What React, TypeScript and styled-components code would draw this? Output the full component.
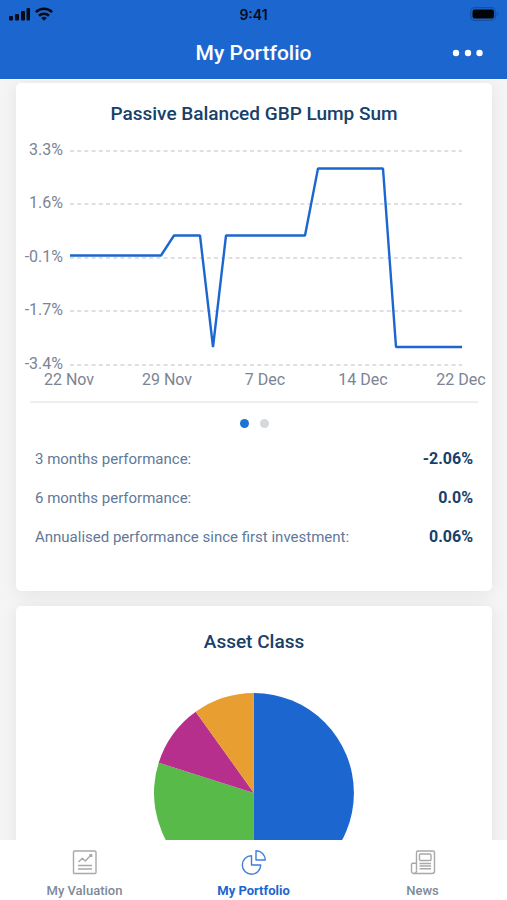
import React from "react";
import styled, { createGlobalStyle } from "styled-components";

const colors = {
  blue: "#1c66cf",
  navy: "#17406a",
  slate: "#5f7999",
  axis: "#7b8494",
};

const GlobalStyle = createGlobalStyle`
  *, *::before, *::after { box-sizing: border-box; }
  body {
    margin: 0;
    background: #f5f5f5;
    font-family: "Roboto", "Liberation Sans", sans-serif;
  }
  button { font: inherit; border: 0; padding: 0; background: none; cursor: pointer; }
`;

const Screen = styled.div`
  display: flex;
  flex-direction: column;
  height: 100vh;
  overflow: hidden;
`;

const Header = styled.header`
  flex: none;
  background: ${colors.blue};
  border-bottom: 1px solid #fff;
`;

const StatusBar = styled.div`
  display: grid;
  grid-template-columns: 1fr auto 1fr;
  align-items: center;
  height: 28px;
  padding: 0 8px;
  color: #060b18;
`;

const StatusIcons = styled.div<{ $end?: boolean }>`
  display: flex;
  gap: 4px;
  align-items: center;
  justify-content: ${(p) => (p.$end ? "flex-end" : "flex-start")};
`;

const Clock = styled.time`
  font-family: "Inter", sans-serif;
  font-size: 14px;
  font-weight: 600;
`;

const TitleBar = styled.div`
  display: grid;
  grid-template-columns: 1fr auto 1fr;
  align-items: center;
  height: 51px;
  padding: 0 23px 2px;
`;

const PageTitle = styled.h1`
  grid-column: 2;
  margin: 0;
  color: #fff;
  font-size: 21px;
  font-weight: 500;
  line-height: 28px;
`;

const MoreButton = styled.button`
  justify-self: end;
  display: flex;
  height: 28px;
  align-items: center;
  color: #fff;
`;

const Content = styled.main`
  flex: 1;
  min-height: 0;
  overflow: hidden;
  display: flex;
  flex-direction: column;
  gap: 15px;
  padding: 3px 15px 0 16px;
`;

const Card = styled.section`
  flex: none;
  background: #fff;
  border-radius: 5px;
  box-shadow: 0 2px 18px rgba(0, 0, 0, 0.08);
  padding-bottom: 35px;
`;

const CardTitle = styled.h2<{ $spaced?: boolean }>`
  margin: 0;
  padding-top: ${(p) => (p.$spaced ? 24 : 19)}px;
  text-align: center;
  color: ${colors.navy};
  font-size: 19px;
  font-weight: 500;
  line-height: 24px;
`;

const LineChart = styled.svg`
  display: block;
  width: 100%;
  margin-top: 10px;
  overflow: visible;
`;

const AxisLabel = styled.text`
  font-size: 16px;
  font-weight: 400;
  fill: ${colors.axis};
`;

const Divider = styled.hr`
  height: 2px;
  margin: 9px 14px 0;
  border: 0;
  background: #edeeef;
`;

const Pager = styled.div`
  display: flex;
  justify-content: center;
  gap: 11px;
  padding: 16px 0 11px;
`;

const PagerDot = styled.button<{ $active?: boolean }>`
  width: 9px;
  height: 9px;
  border-radius: 50%;
  background: ${(p) => (p.$active ? "#1b74d4" : "#d6d9dc")};
`;

const Figures = styled.dl`
  margin: 0;
  padding: 0 19px;
`;

const FigureRow = styled.div`
  display: flex;
  align-items: center;
  justify-content: space-between;
  height: 39px;
`;

const FigureLabel = styled.dt`
  color: ${colors.slate};
  font-size: 15px;
`;

const FigureValue = styled.dd`
  margin: 0;
  color: ${colors.navy};
  font-size: 16px;
  font-weight: 700;
`;

const Pie = styled.svg`
  display: block;
  width: 42%;
  margin: 39px auto 0;
`;

const TabBar = styled.nav`
  flex: none;
  display: grid;
  grid-template-columns: repeat(3, 1fr);
  height: 60px;
  background: #fff;
  position: relative;
`;

const Tab = styled.a<{ $active?: boolean }>`
  display: flex;
  flex-direction: column;
  align-items: center;
  gap: 7px;
  padding-top: 9px;
  color: ${(p) => (p.$active ? colors.blue : "#7e8a99")};
  font-size: 13px;
  font-weight: ${(p) => (p.$active ? 700 : 500)};
  line-height: 18px;
  text-decoration: none;
`;

const TabIcon = styled.svg<{ $active?: boolean }>`
  width: 26px;
  height: 26px;
  fill: none;
  stroke: ${(p) => (p.$active ? "#3f7fd8" : "#a9a9a9")};
  stroke-width: 1.4;
  stroke-linejoin: round;
`;

const yAxis = [
  { label: "3.3%", y: 15 },
  { label: "1.6%", y: 68 },
  { label: "-0.1%", y: 122 },
  { label: "-1.7%", y: 175 },
  { label: "-3.4%", y: 229 },
];

const xAxis = [
  { label: "22 Nov", x: 53 },
  { label: "29 Nov", x: 151 },
  { label: "7 Dec", x: 249 },
  { label: "14 Dec", x: 347 },
  { label: "22 Dec", x: 445 },
];

const figures = [
  { label: "3 months performance:", value: "-2.06%" },
  { label: "6 months performance:", value: "0.0%" },
  { label: "Annualised performance since first investment:", value: "0.06%" },
];

const slices = [
  { from: 0, to: 0.5, color: colors.blue },
  { from: 0.5, to: 0.799, color: "#58ba48" },
  { from: 0.799, to: 0.901, color: "#b72f8d" },
  { from: 0.901, to: 1, color: "#e89e30" },
];

const pointAt = (turn: number) => {
  const a = turn * Math.PI * 2;
  return `${100 + 100 * Math.sin(a)} ${100 - 100 * Math.cos(a)}`;
};

function Performance() {
  return (
    <Card>
      <CardTitle>Passive Balanced GBP Lump Sum</CardTitle>
      <LineChart viewBox="0 0 476 256" role="img" aria-label="Performance over time">
        {yAxis.map((t) => (
          <g key={t.label}>
            <line x1="54" x2="446" y1={t.y} y2={t.y} stroke="#d3d5d7" strokeWidth="1.6" strokeDasharray="4 3.2" />
            <AxisLabel x="47" y={t.y + 4} textAnchor="end">{t.label}</AxisLabel>
          </g>
        ))}
        {xAxis.map((t) => (
          <AxisLabel key={t.label} x={t.x} y="249" textAnchor="middle">{t.label}</AxisLabel>
        ))}
        <polyline
          points="54,119.5 145,119.5 158,99.5 184,99.5 197,211 210,99.5 289,99.5 302,32.5 367,32.5 380,211 446,211"
          fill="none"
          stroke={colors.blue}
          strokeWidth="2.4"
          strokeLinejoin="bevel"
        />
      </LineChart>
      <Divider />
      <Pager>
        <PagerDot $active aria-label="Chart 1" />
        <PagerDot aria-label="Chart 2" />
      </Pager>
      <Figures>
        {figures.map((f) => (
          <FigureRow key={f.label}>
            <FigureLabel>{f.label}</FigureLabel>
            <FigureValue>{f.value}</FigureValue>
          </FigureRow>
        ))}
      </Figures>
    </Card>
  );
}

function AssetClass() {
  return (
    <Card>
      <CardTitle $spaced>Asset Class</CardTitle>
      <Pie viewBox="0 0 200 200" role="img" aria-label="Asset class breakdown">
        {slices.map((s) => (
          <path key={s.color} fill={s.color} d={`M100 100 L${pointAt(s.from)} A100 100 0 0 1 ${pointAt(s.to)} Z`} />
        ))}
      </Pie>
    </Card>
  );
}

export default function App() {
  return (
    <>
      <GlobalStyle />
      <Screen>
        <Header>
          <StatusBar>
            <StatusIcons>
              <svg width="23" height="14" viewBox="0 0 23 14" fill="currentColor" aria-hidden="true">
                <rect x="1" y="9" width="4" height="4.5" rx="1" />
                <rect x="7" y="7" width="4" height="6.5" rx="1" />
                <rect x="13" y="4" width="4" height="9.5" rx="1" />
                <rect x="18.5" y="1" width="3.5" height="12.5" rx="1" />
              </svg>
              <svg width="18" height="14" viewBox="0 0 18 14" aria-hidden="true" fill="none" stroke="currentColor" strokeWidth="2.6">
                <path d="M0.9 5.1a11.6 11.6 0 0 1 16.2 0" />
                <path d="M4 8.7a7.2 7.2 0 0 1 10 0" />
                <path d="M9 13.8L6.2 11a4 4 0 0 1 5.6 0z" fill="currentColor" stroke="none" />
              </svg>
            </StatusIcons>
            <Clock>9:41</Clock>
            <StatusIcons $end>
              <svg width="29" height="14" viewBox="0 0 29 14" aria-hidden="true">
                <rect x="0.7" y="0.7" width="24.6" height="12.6" rx="4" fill="none" stroke="#194f9f" strokeWidth="1.2" />
                <rect x="2.5" y="2.5" width="21.5" height="9" rx="2.2" fill="#020408" />
                <path d="M26.8 5v4a2.2 2.2 0 0 0 0-4z" fill="#194f9f" />
              </svg>
            </StatusIcons>
          </StatusBar>
          <TitleBar>
            <PageTitle>My Portfolio</PageTitle>
            <MoreButton aria-label="More options">
              <svg width="32" height="8" viewBox="0 0 32 8" fill="currentColor" aria-hidden="true">
                <circle cx="4" cy="4" r="3.2" />
                <circle cx="16" cy="4" r="3.2" />
                <circle cx="27.5" cy="4" r="3.2" />
              </svg>
            </MoreButton>
          </TitleBar>
        </Header>
        <Content>
          <Performance />
          <AssetClass />
        </Content>
        <TabBar>
          <Tab href="#valuation">
            <TabIcon viewBox="0 0 26 26" aria-hidden="true">
              <rect x="1.5" y="2" width="22.5" height="22.5" rx="1" />
              <path d="M6.5 13L10.3 9.3L13.3 12L19.5 5.5M17.3 5.7h2.4v2.2M6 16.5h14M6 20h14" />
            </TabIcon>
            My Valuation
          </Tab>
          <Tab href="#portfolio" $active aria-current="page">
            <TabIcon $active viewBox="0 0 26 26" aria-hidden="true">
              <path d="M10.5 6.8V16h9.2a9.2 9.2 0 1 1-9.2-9.2z" />
              <path d="M15 1.8v9.2h9.3A9.3 9.3 0 0 0 15 1.8z" />
            </TabIcon>
            My Portfolio
          </Tab>
          <Tab href="#news">
            <TabIcon viewBox="0 0 26 26" aria-hidden="true">
              <path d="M6.5 21.5V3.5A1.5 1.5 0 0 1 8 2h15a1.500 1.500 0 0 1 1.500 1.500v18.500a2.500 2.500 0 0 1-2.500 2.500H4a2.500 2.500 0 0 1-2.500-2.500V15.500a1.200 1.200 0 0 1 1.200-1.200H6.500" />
              <path d="M6.5 21.5a2.6 2.6 0 0 1-2.5 3" />
              <rect x="9.5" y="5" width="11.5" height="6.5" rx="1" />
              <path d="M9.5 14.5H21M9.5 17H21M9.5 19.8H21" />
            </TabIcon>
            News
          </Tab>
        </TabBar>
      </Screen>
    </>
  );
}
